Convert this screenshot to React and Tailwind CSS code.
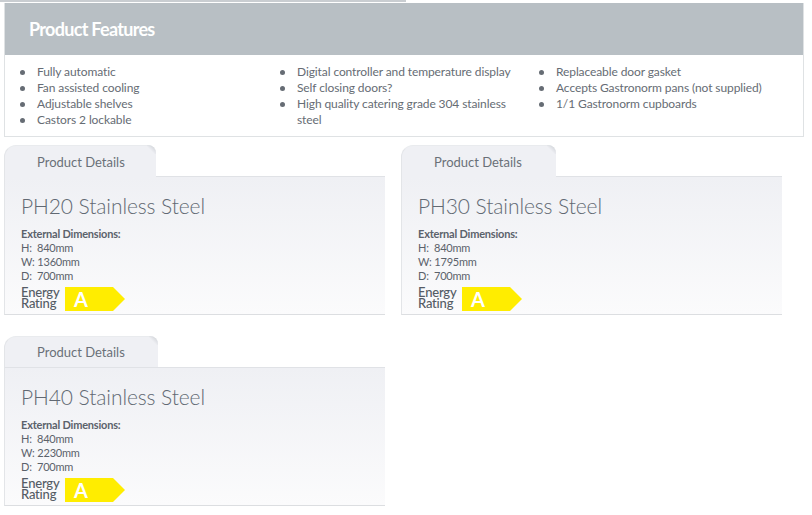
const features = [
  ['Fully automatic', 'Fan assisted cooling', 'Adjustable shelves', 'Castors 2 lockable'],
  ['Digital controller and temperature display', 'Self closing doors?', 'High quality catering grade 304 stainless steel'],
  ['Replaceable door gasket', 'Accepts Gastronorm pans (not supplied)', '1/1 Gastronorm cupboards'],
];

const products = [
  { name: 'PH20 Stainless Steel', width: '1360mm', tab: 'w-[152px] h-[32px] -mb-[1px] z-10 pt-[7px]' },
  { name: 'PH30 Stainless Steel', width: '1795mm', tab: 'w-[155px] h-[32px] -mb-[1px] z-10 pt-[7px]' },
  { name: 'PH40 Stainless Steel', width: '2230mm', tab: 'w-[154px] h-[31px] pt-[6px]' },
];

function ProductCard({ product }) {
  return (
    <div className="w-[381px] h-[170px] flex flex-col">
      <div className={`${product.tab} relative shrink-0 rounded-tl-[12px] rounded-tr-[8px] bg-[#eff0f4] border-l border-[#e3e5e8] border-t border-t-[#e9ebee] pl-[32px] text-[13px] leading-[18px] text-[#6a7078]`}>
        Product Details
        <span className="absolute -top-px right-0 w-[9px] h-[9px] rounded-tr-[8px] bg-gradient-to-bl from-[#c6c9cf] to-transparent to-60%"></span>
      </div>
      <div className="flex-1 border-l border-[#e3e5e8] border-t border-t-[#e0e2e6] border-b border-b-[#dcdee1] bg-gradient-to-b from-[#eff0f4] to-[#fbfbfc] pl-[16px] pt-[15px]">
        <div className="text-[21px] leading-[28px] font-light tracking-[-0.1px] text-[#616973]">{product.name}</div>
        <div className="mt-[7px] text-[11px] leading-[14px] text-[#5b626b]">
          <div className="font-bold tracking-[-0.2px]">External Dimensions:</div>
          <div className="tracking-[-0.2px]">H:&nbsp; 840mm</div>
          <div className="tracking-[-0.2px]">W: {product.width}</div>
          <div className="tracking-[-0.2px]">D:&nbsp; 700mm</div>
        </div>
        <div className="mt-[4px] flex items-start gap-[5px]">
          <div className="w-[39px] text-[13px] leading-[11px] font-medium tracking-[-0.2px] text-[#555c65]">
            Energy
            <br />
            Rating
          </div>
          <svg width="60" height="24" viewBox="0 0 60 24" className="shrink-0">
            <polygon points="0,0 48,0 60,12 48,24 0,24" fill="#ffed00" />
            <text x="9" y="20" fontSize="20" fontWeight="700" fill="#fff" fontFamily="Lato, sans-serif">A</text>
          </svg>
        </div>
      </div>
    </div>
  );
}

export default function App() {
  return (
    <div className="w-[812px] h-[515px] bg-white overflow-hidden font-['Lato',sans-serif]">
      <div className="w-[406px] h-[2px] bg-[#c9cdd1]"></div>
      <div className="ml-[4px] mt-[1px] w-[800px] h-[134px] border-x border-b border-[#dfe2e4] flex flex-col">
        <div className="h-[52px] shrink-0 bg-[#b8bfc4] pl-[24px] flex items-center text-[18px] font-bold tracking-[-0.7px] text-white">
          Product Features
        </div>
        <div className="flex pl-[15px] pt-[9px] text-[12px] tracking-[-0.1px] leading-[16px] text-[#666c74]">
          {features.map((col, i) => (
            <ul key={i} className={i === 2 ? 'w-[250px]' : i === 1 ? 'w-[259px]' : 'w-[260px]'}>
              {col.map((item) => (
                <li key={item} className="flex">
                  <span className="w-[17px] shrink-0 flex pt-[6px]">
                    <span className="w-[5px] h-[5px] rounded-full bg-[#666c74]"></span>
                  </span>
                  <span className="w-[225px]">{item}</span>
                </li>
              ))}
            </ul>
          ))}
        </div>
      </div>
      <div className="ml-[4px] mt-[8px] flex flex-wrap gap-x-[16px] gap-y-[21px] w-[800px]">
        {products.map((p) => (
          <ProductCard key={p.name} product={p} />
        ))}
      </div>
    </div>
  );
}
